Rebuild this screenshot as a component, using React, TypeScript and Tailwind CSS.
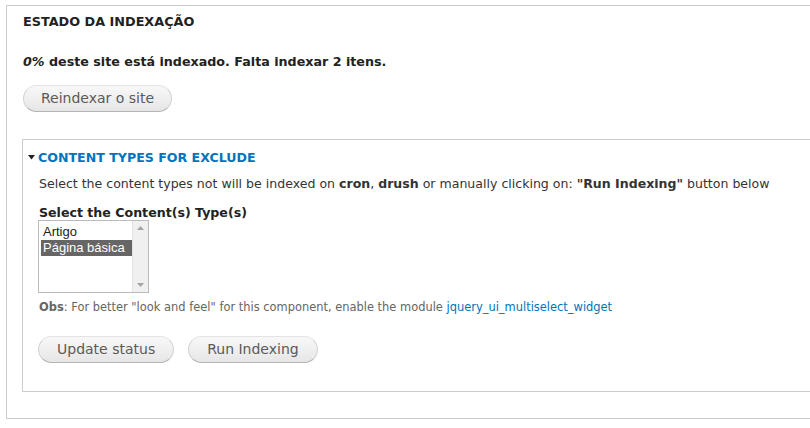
import { FC } from 'react';

const btn =
  "rounded-full border border-[#d2d2d2] border-t-[#e4e4e4] border-b-[#b4b4b4] bg-gradient-to-b from-[#f8f8f8] to-[#e6e6e6] text-[#5a5a5a] text-[14px] leading-[17px] py-[4px]";

const App: FC = () => {
  return (
    <div className="w-[810px] h-[428px] overflow-hidden bg-white pt-[5px] pl-[6px] font-['DejaVu_Sans',sans-serif] text-[#333]">
      <div className="w-[830px] h-[414px] border border-[#cccccc] pl-[16px] pt-[8px]">
        <h2 className="text-[12.8px] leading-[16px] font-bold uppercase text-[#222]">Estado da indexação</h2>
        <p className="mt-[23px] text-[12.7px] leading-[18px] font-bold text-[#222]">
          <em>0%</em> deste site está indexado. Falta indexar 2 itens.
        </p>
        <div className="mt-[14px]">
          <button className={`${btn} px-[17px]`}>Reindexar o site</button>
        </div>

        <div className="mt-[27px] -ml-[1px] w-[820px] h-[253px] border border-[#cccccc] pl-[16px] pt-[10px]">
          <div className="flex items-center gap-[3px] -ml-[11px] text-[#0074bd] text-[12.6px] leading-[16px] font-bold uppercase">
            <svg width="7" height="5" viewBox="0 0 7 5" className="mt-[-1px]">
              <path d="M0 0 H7 L3.5 4.5 Z" fill="#222" />
            </svg>
            <span>Content types for exclude</span>
          </div>
          <p className="mt-[10px] text-[12.55px] leading-[16px] text-[#333]">
            Select the content types not will be indexed on <strong>cron</strong>, <strong>drush</strong> or manually clicking on: <strong>"Run Indexing"</strong> button below
          </p>
          <p className="mt-[13px] text-[12.6px] leading-[16px] font-bold text-[#222]">Select the Content(s) Type(s)</p>
          <div className="mt-[-1px] -ml-[1px] flex w-[111px] h-[73px] border border-[#bbbbbb] font-['Liberation_Sans',sans-serif] text-[13px] leading-[16px]">
            <div className="flex-1 pl-[2px] pt-[3px]">
              <div className="px-[2px] text-[#222]">Artigo</div>
              <div className="px-[2px] bg-[#666666] text-white">Página básica</div>
            </div>
            <div className="w-[16px] bg-[#f0f0f0] border-l border-[#e2e2e2] flex flex-col justify-between items-center py-[5px]">
              <svg width="7" height="4" viewBox="0 0 7 4"><path d="M0 4 L3.5 0 L7 4 Z" fill="#a3a3a3" /></svg>
              <svg width="7" height="4" viewBox="0 0 7 4"><path d="M0 0 L7 0 L3.5 4 Z" fill="#a3a3a3" /></svg>
            </div>
          </div>
          <p className="mt-[7px] text-[11.45px] leading-[14px] text-[#666]">
            <strong>Obs</strong>: For better "look and feel" for this component, enable the module <span className="text-[#0074bd]">jquery_ui_multiselect_widget</span>
          </p>
          <div className="mt-[22px] -ml-[1px] flex gap-[14px]">
            <button className={`${btn} px-[18px]`}>Update status</button>
            <button className={`${btn} px-[18px]`}>Run Indexing</button>
          </div>
        </div>
      </div>
    </div>
  );
};

export default App;
